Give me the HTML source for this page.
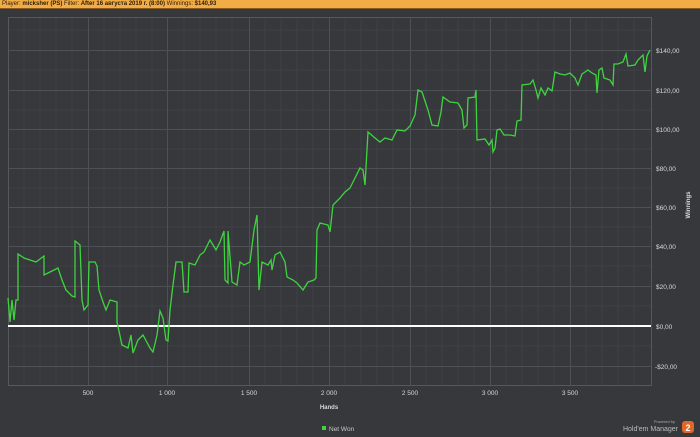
<!DOCTYPE html>
<html><head><meta charset="utf-8"><style>
html,body{margin:0;padding:0;width:700px;height:437px;overflow:hidden;background:#36383c;font-family:"Liberation Sans",sans-serif}
#hdr{position:absolute;left:0;top:0;width:700px;height:9px;background:#f2ac46;border-bottom:1px solid #8a5a20;font-size:6px;line-height:9px;color:#2a1d0a;padding-left:2px;box-sizing:border-box}
#hdr b{font-weight:bold}
</style></head><body>
<div id="hdr">Player: <b>micksher (PS)</b> Filter: <b>After 16 августа 2019 г. (8:00)</b> Winnings: <b>$140,93</b></div>
<svg width="700" height="437" style="position:absolute;left:0;top:0" font-family="Liberation Sans, sans-serif">
<g stroke="#3f4146" stroke-width="1">
<path d="M8 30H651M8 70H651M8 110H651M8 149H651M8 188H651M8 227H651M8 266H651M8 306H651M8 346H651"/>
<path d="M24 17V385M40 17V385M56 17V385M72 17V385M104 17V385M120 17V385M136 17V385M152 17V385M184 17V385M200 17V385M216 17V385M232 17V385M265 17V385M281 17V385M297 17V385M313 17V385M345 17V385M361 17V385M377 17V385M393 17V385M426 17V385M442 17V385M458 17V385M474 17V385M506 17V385M522 17V385M538 17V385M554 17V385M586 17V385M602 17V385M618 17V385M634 17V385"/>
</g>
<g stroke="#4d5055" stroke-width="1">
<path d="M8 50.5H651M8 90.5H651M8 129.5H651M8 168.5H651M8 207.5H651M8 246.5H651M8 286.5H651M8 366.5H651"/>
<path d="M88.5 17V385M167.5 17V385M249.5 17V385M329.5 17V385M410.5 17V385M490.5 17V385M570.5 17V385"/>
</g>
<rect x="8.5" y="17.5" width="643" height="368" fill="none" stroke="#55585d"/>
<line x1="8" y1="326" x2="651" y2="326" stroke="#fff" stroke-width="2"/>
<polyline fill="none" stroke="#3fd43f" stroke-width="1.3" points="8,298 10,322 12,300 14,320 16,300 18,300 18,254 24,258 30,260 36,262 40,259 44,256 44,275 48,273 52,271 58,268 62,280 66,290 72,296 75,297 75,241 80,245 82,300 84,310 88,305 89,262 95,262 97,266 99,290 103,302 106,310 110,300 117,302 117,322 122,345 128,348 131,335 133,353 138,340 143,335 150,348 153,352 157,335 160,311 163,318 166,340 168,341 170,310 173,285 176,262 182,262 184,292 188,292 189,263 195,265 200,255 204,252 210,240 213,245 216,250 220,242 224,231 225,280 228,283 228,231 232,282 237,285 240,262 244,265 250,262 254,230 257,215 259,290 262,262 268,265 271,260 272,270 275,255 280,252 285,262 287,277 293,280 297,283 303,290 308,282 314,280 316,278 317,230 320,223 328,225 330,232 333,205 340,198 345,192 350,188 355,178 360,168 363,170 365,185 368,132 375,138 380,142 385,138 392,140 397,130 405,131 410,126 415,115 418,90 422,92 428,110 432,125 438,126 441,112 443,97 450,102 458,103 462,110 464,128 467,125 468,98 475,97 476,90 477,140 485,139 489,145 492,140 493,152 495,148 497,130 500,129 504,135 510,135 515,136 517,121 521,120 522,85 530,84 533,80 536,90 538,98 541,88 545,95 548,88 552,91 555,72 560,74 565,75 570,73 575,78 578,85 582,74 588,70 592,73 596,75 597,93 599,70 602,68 604,78 610,80 613,85 614,64 618,64 623,62 626,54 628,66 635,65 638,60 643,55 645,72 647,56 650,50"/>
<g fill="#d8d8d8" font-size="6.5">
<text x="656" y="53">$140,00</text><text x="656" y="93">$120,00</text><text x="656" y="132">$100,00</text><text x="656" y="171">$80,00</text><text x="656" y="210">$60,00</text><text x="656" y="249">$40,00</text><text x="656" y="289">$20,00</text><text x="656" y="329">$0,00</text><text x="655" y="369">-$20,00</text>
<g text-anchor="middle"><text x="88" y="395">500</text><text x="167" y="395">1 000</text><text x="249" y="395">1 500</text><text x="329" y="395">2 000</text><text x="410" y="395">2 500</text><text x="490" y="395">3 000</text><text x="570" y="395">3 500</text></g>
<text x="329" y="409" text-anchor="middle" font-weight="bold" font-size="6">Hands</text>
<text transform="translate(690,205) rotate(-90)" text-anchor="middle" font-weight="bold" font-size="6">Winnings</text>
<rect x="322" y="426" width="4" height="4" fill="#3fd43f"/>
<text x="329" y="431" fill="#c8c8c8">Net Won</text>
<text x="675" y="423" text-anchor="end" font-size="4" fill="#aaa">Powered by</text>
<text x="678" y="431" text-anchor="end" font-size="7" fill="#bbb">Hold'em Manager</text>
</g>
<rect x="682" y="421" width="12" height="12" rx="3" fill="#e0662a"/>
<text x="688" y="431" text-anchor="middle" font-size="9" font-weight="bold" fill="#fff">2</text>
</svg>
</body></html>
